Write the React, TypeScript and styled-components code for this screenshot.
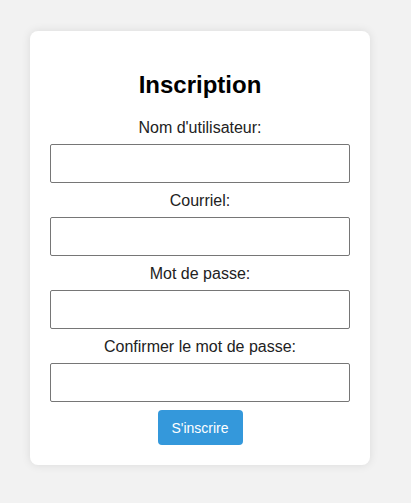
import React from "react";
import styled, { createGlobalStyle } from "styled-components";

const Global = createGlobalStyle`
  html, body { margin: 0; padding: 0; background: #f2f2f2; }
  body { font-family: "Liberation Sans", Arial, sans-serif; }
  * { box-sizing: border-box; }
`;

const Page = styled.div`
  display: flex;
  align-items: flex-start;
  padding: 31px 0 0 30px;
  min-height: 503px;
`;

const Card = styled.div`
  width: 340px;
  background: #ffffff;
  border-radius: 8px;
  box-shadow: 0 0 10px rgba(0, 0, 0, 0.1);
  padding: 20px;
  display: flex;
  flex-direction: column;
  align-items: center;
`;

const Title = styled.h2`
  margin: 20px 0 19px;
  font-size: 24px;
  line-height: 28px;
  font-weight: bold;
  color: #000;
  text-align: center;
`;

const Form = styled.form`
  width: 100%;
  display: flex;
  flex-direction: column;
  align-items: center;
  gap: 8px;
`;

const Label = styled.label`
  display: block;
  font-size: 16px;
  line-height: 18px;
  color: #222;
  text-align: center;
  padding-top: 1px;
  height: 18px;
`;

const Input = styled.input`
  width: 100%;
  height: 39px;
  border: 1px solid #767676;
  border-radius: 2px;
  padding: 0 10px;
  font-size: 16px;
  background: #fff;
  outline: none;
`;

const Button = styled.button`
  width: 85px;
  height: 35px;
  padding: 0;
  border: none;
  border-radius: 4px;
  background: #3498db;
  color: #fff;
  font-family: "Liberation Sans", Arial, sans-serif;
  font-size: 14px;
  cursor: pointer;
`;

const fields = [
  { id: "username", label: "Nom d'utilisateur:", type: "text" },
  { id: "email", label: "Courriel:", type: "email" },
  { id: "password", label: "Mot de passe:", type: "password" },
  { id: "confirm", label: "Confirmer le mot de passe:", type: "password" },
];

export default function App() {
  return (
    <>
      <Global />
      <Page>
        <Card>
          <Title>Inscription</Title>
          <Form onSubmit={(e) => e.preventDefault()}>
            {fields.map((f) => (
              <React.Fragment key={f.id}>
                <Label htmlFor={f.id}>{f.label}</Label>
                <Input id={f.id} type={f.type} />
              </React.Fragment>
            ))}
            <Button type="submit">S'inscrire</Button>
          </Form>
        </Card>
      </Page>
    </>
  );
}
